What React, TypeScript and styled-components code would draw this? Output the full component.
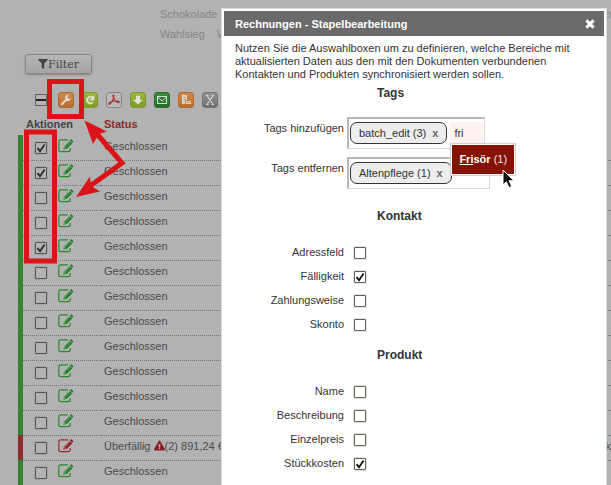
import React from "react";
import styled, { createGlobalStyle } from "styled-components";
import { FaExclamationTriangle, FaFilter } from "react-icons/fa";

const GlobalStyle = createGlobalStyle`
  * { box-sizing: border-box; }
  body {
    margin: 0;
    background: #b2b2b2;
    color: #4b4b4b;
    font-family: "Liberation Sans", Arial, sans-serif;
    font-size: 11px;
    line-height: 13px;
  }
  button, input { font: inherit; color: inherit; margin: 0; padding: 0; }
`;

/* ---------- page behind the dialog ---------- */

const Page = styled.main`
  position: relative;
  height: 100vh;
  overflow: hidden;
`;

const TagCloud = styled.nav`
  padding: 4px 0 0 160px;
`;

const TagLine = styled.div`
  display: flex;
  gap: 12px;
  line-height: 20px;
`;

const TagLink = styled.a<{ $end?: boolean }>`
  color: #858585;
  text-decoration: none;
  white-space: nowrap;
  margin-left: ${(p) => (p.$end ? "auto" : "0")};
`;

const FilterButton = styled.button`
  display: flex;
  align-items: center;
  justify-content: center;
  width: 67px;
  height: 20px;
  margin: 10px 0 0 25px;
  border: 1px solid #868686;
  border-radius: 3px;
  background: linear-gradient(#b6b6b6, #a4a4a4);
  box-shadow: 0 1px 2px rgba(0, 0, 0, 0.25);
  color: #444;
  font-family: "DejaVu Serif", serif;
`;

const Toolbar = styled.div`
  display: flex;
  align-items: center;
  gap: 8px;
  margin: 18px 0 0 34px;
`;

const ToggleAll = styled.button`
  display: block;
  width: 14px;
  height: 14px;
  margin-right: 2px;
  border: 0;
  background: none;
  svg { display: block; }
`;

const ToolButton = styled.button<{ $bg: string; $edge: string }>`
  display: block;
  width: 16px;
  height: 16px;
  border: 1px solid ${(p) => p.$edge};
  border-radius: 3px;
  background: ${(p) => p.$bg};
  svg { display: block; }
`;

const Table = styled.table`
  width: calc(100% - 18px);
  margin: 8px 0 0 18px;
  border-collapse: separate;
  border-spacing: 0;
`;

const Head = styled.th<{ $sorted?: boolean }>`
  height: 19px;
  padding: 2px 0 0 3px;
  text-align: left;
  vertical-align: top;
  color: ${(p) => (p.$sorted ? "#8a2b30" : "#444")};
  &:first-child { padding-left: 8px; }
`;

const Marker = styled.td<{ $overdue?: boolean }>`
  width: 5px;
  padding: 0;
  background: ${(p) => (p.$overdue ? "#8b3030" : "#338533")};
`;

const Cell = styled.td<{ $width?: number }>`
  width: ${(p) => (p.$width ? `${p.$width}px` : "auto")};
  height: 25px;
  padding: 4px 0 0 3px;
  border-top: 1px dotted #777;
  vertical-align: top;
  white-space: nowrap;
  tr:first-child > & { border-top-color: transparent; }
`;

const Actions = styled.div`
  display: flex;
  align-items: flex-start;
  gap: 10px;
  padding-left: 8px;
`;

const IconButton = styled.button<{ $overdue?: boolean }>`
  display: block;
  height: 14px;
  margin-top: -1px;
  border: 0;
  background: none;
  color: ${(p) => (p.$overdue ? "#a32a2a" : "#2a8a2c")};
  svg { display: block; }
`;

const Warn = styled(FaExclamationTriangle)`
  width: 11px;
  height: 11px;
  color: #8b1f24;
  vertical-align: -1px;
`;

/* ---------- check box ---------- */

const CheckWrap = styled.span<{ $dim?: boolean }>`
  display: inline-grid;
  width: 14px;
  height: 14px;
  margin-top: ${(p) => (p.$dim ? "1px" : "0")};
  > * { grid-area: 1 / 1; }
  svg { pointer-events: none; }
`;

const CheckInput = styled.input<{ $dim?: boolean }>`
  appearance: none;
  width: 12px;
  height: 12px;
  margin: 1px;
  border: 1px solid ${(p) => (p.$dim ? "#555" : "#62625a")};
  border-radius: 1px;
  box-shadow: 0 0 0 1px ${(p) => (p.$dim ? "#a5a5a5" : "#e4e2dc")};
  background: ${(p) => (p.$dim ? "#b2b2b2" : "#fff")};
`;

function Check(props: { id?: string; label?: string; checked?: boolean; dim?: boolean }) {
  return (
    <CheckWrap $dim={props.dim}>
      <CheckInput
        type="checkbox"
        id={props.id}
        aria-label={props.label}
        defaultChecked={props.checked}
        $dim={props.dim}
      />
      {props.checked && (
        <svg width="14" height="14" viewBox="0 0 14 14">
          <path d="M3.5 7.2 6 10.2 10.6 3.6" fill="none" stroke={props.dim ? "#2c2c2c" : "#111"} strokeWidth="1.8" />
        </svg>
      )}
    </CheckWrap>
  );
}

/* ---------- dialog ---------- */

const Overlay = styled.div`
  position: absolute;
  inset: 0;
  padding: 8px 4px 0 221px;
`;

const Dialog = styled.section`
  min-height: 100%;
  padding: 2px;
  border: 1px solid #dcdcdc;
  border-bottom: 0;
  background: #fff;
  color: #333;
`;

const TitleBar = styled.header`
  display: flex;
  align-items: center;
  justify-content: space-between;
  height: 25px;
  padding: 1px 9px 0 11px;
  background: #6a6a6a;
  color: #fff;
`;

const Title = styled.h2`
  margin: 0;
  font-size: 11px;
`;

const CloseButton = styled.button`
  width: 10px;
  height: 10px;
  border: 0;
  background: none;
  svg { display: block; }
`;

const Content = styled.form`
  padding: 6px 11px 0;
`;

const Intro = styled.p`
  max-width: 350px;
  margin: 0;
`;

const Heading = styled.h3`
  margin: 0 0 0 142px;
  font-size: 12px;
`;

const Group = styled.fieldset<{ $top: number }>`
  min-width: 0;
  margin: ${(p) => p.$top}px 0 0;
  padding: 0;
  border: 0;
`;

const TagRows = styled.div`
  display: grid;
  gap: 8px;
  margin-top: 17px;
`;

const TagRow = styled.div`
  display: grid;
  grid-template-columns: 109px auto;
  justify-content: start;
  gap: 3px;
  > label { padding-top: 5px; text-align: right; }
`;

const TagBox = styled.div`
  display: flex;
  align-items: flex-start;
  gap: 3px;
  height: 32px;
  padding: 3px 1px 0 1px;
  border: 1px solid #d8d8d8;
  border-top: 2px solid #b8b8b8;
  border-left: 2px solid #b8b8b8;
`;

const Pill = styled.span`
  display: flex;
  align-items: center;
  gap: 6px;
  height: 22px;
  padding: 0 8px;
  border: 1px solid #333;
  border-radius: 7px;
  background: #ededed;
  white-space: nowrap;
`;

const RemoveButton = styled.button`
  border: 0;
  background: none;
  color: #666;
  font-weight: bold;
`;

const Suggest = styled.div`
  position: relative;
`;

const TagInput = styled.input<{ $active?: boolean }>`
  display: block;
  width: 33px;
  height: 21px;
  padding: 0 4px;
  border: 0;
  outline: 0;
  background: ${(p) => (p.$active ? "#fdf2ef" : "transparent")};
`;

const Menu = styled.ul`
  position: absolute;
  z-index: 1;
  top: 21px;
  left: 0;
  margin: 0;
  padding: 1px;
  border: 1px solid #d0d0d0;
  background: #fff;
  list-style: none;
`;

const Option = styled.li`
  padding: 8px 7px;
  background: #861204;
  color: #f3e4e2;
  white-space: nowrap;
  b { color: #fff; }
`;

const Pointer = styled.svg`
  position: absolute;
  top: 25px;
  left: 51px;
`;

const Checks = styled.div`
  display: grid;
  gap: 10px;
  margin-top: 23px;
`;

const CheckRow = styled.div`
  display: grid;
  grid-template-columns: 109px auto;
  justify-content: start;
  gap: 9px;
  height: 14px;
  > label { text-align: right; }
`;

const Annotations = styled.svg`
  position: absolute;
  top: 0;
  left: 0;
  pointer-events: none;
`;

function EditIcon({ id, overdue }: { id: string; overdue?: boolean }) {
  const light = overdue ? "#bd6a62" : "#75a66d";
  const dark = overdue ? "#861616" : "#16791f";
  return (
    <svg width="16" height="14" viewBox="0 0 16 14">
      <defs>
        <linearGradient id={id} x1="0" y1="0" x2="1" y2="1">
          <stop offset="0.3" stopColor={light} />
          <stop offset="0.6" stopColor={dark} />
        </linearGradient>
      </defs>
      <path
        d="M10 .8H2.8Q.8.8.8 2.8v7.8Q.8 12.6 2.8 12.6h7.4Q12.2 12.6 12.2 10.6V9"
        fill="none"
        stroke="currentColor"
        strokeWidth="1.2"
      />
      <path d="M5.2 10.8 6 7.4 11.6 1.7 14.3 4.3 8.6 10.1z" fill={`url(#${id})`} />
      <path d="M12 1.2 12.8.5q.4-.3.8 0l1.5 1.5q.4.4 0 .8l-.8.9z" fill={dark} />
      <path d="M6.2 8.4 7.6 9.8" stroke="#c8c8c8" strokeWidth=".7" />
    </svg>
  );
}

const tools = [
  {
    name: "Stapelbearbeitung", bg: "linear-gradient(#cf8950,#bd6c28)", edge: "#b06a31",
    art: <><path d="M2.8 11.2 8 6" stroke="#e3d8cd" strokeWidth="2" strokeLinecap="round" /><path d="M9.7 2A3 3 0 1 0 12 5.3L10 6 8.4 4.5z" fill="#e3d8cd" /></>,
  },
  {
    name: "Aktualisieren", bg: "linear-gradient(#9cb63e,#7b9d25)", edge: "#7d9b2b",
    art: <><path d="M9.4 4.6A3.2 3.2 0 1 0 9.8 9.2" fill="none" stroke="#dce0cb" strokeWidth="2" /><path d="M11.4 2.2v5.2H6.2z" fill="#dce0cb" /></>,
  },
  {
    name: "PDF", bg: "#b9b9b9", edge: "#858585",
    art: <path d="M6.1 2.2C7.6 1.8 6.7 5 5.4 7.5 4.1 10 2.4 12 1.9 11.1 1.3 9.8 5 8.1 8.2 8 11 7.8 12.8 8.6 12.2 9.4 11.2 10.4 8.5 8.3 7.3 6.2 6.2 4.3 5.4 2.5 6.1 2.2" fill="none" stroke="#a52d31" strokeWidth="1.1" />,
  },
  {
    name: "Herunterladen", bg: "linear-gradient(#9cb63e,#7b9d25)", edge: "#7d9b2b",
    art: <path d="M5 2.8h4v4h3L7 11.6 2 6.8h3z" fill="#e1e4d4" />,
  },
  {
    name: "E-Mail", bg: "linear-gradient(#3f8a42,#226e27)", edge: "#286c2c",
    art: <><rect x="2.5" y="3.5" width="9" height="7" fill="#307a33" stroke="#d6ded4" /><path d="M2.5 4 7 8 11.5 4" fill="none" stroke="#d6ded4" /></>,
  },
  {
    name: "Dokumente", bg: "linear-gradient(#cf8950,#bd6c28)", edge: "#b06a31",
    art: <><path d="M3 2h5v9H3z" fill="#e0d3c5" /><path d="M4.5 4.5h2M4.5 6.5h2" stroke="#c57b3d" strokeWidth=".8" /><path d="M6.5 7.5h6v4h-6z" fill="#e0d3c5" stroke="#bd6c28" strokeWidth=".8" /><path d="M8 9.5h3" stroke="#c57b3d" strokeWidth=".8" /></>,
  },
  {
    name: "Excel", bg: "linear-gradient(#949494,#6f6f6f)", edge: "#747474",
    art: <path d="M4 2.5 10 11.5M10 2.5 4 11.5M3 2.5h2.5M8.5 2.5H11M3 11.5h2.5M8.5 11.5H11" stroke="#d8d8d8" strokeWidth="1.2" />,
  },
];

const rows = [true, true, false, false, true, false, false, false, false, false, false, false, false, false].map(
  (checked, i) => ({ id: i, checked, overdue: i === 12 })
);

function Checklist({ title, top, items }: { title: string; top: number; items: [string, boolean][] }) {
  return (
    <Group $top={top} aria-label={title}>
      <Heading>{title}</Heading>
      <Checks>
        {items.map(([name, on]) => (
          <CheckRow key={name}>
            <label htmlFor={name}>{name}</label>
            <Check id={name} checked={on} />
          </CheckRow>
        ))}
      </Checks>
    </Group>
  );
}

export default function App() {
  return (
    <Page>
      <GlobalStyle />
      <TagCloud>
        <TagLine>
          <TagLink href="#schokolade">Schokolade</TagLink>
          <TagLink href="#p" $end>p</TagLink>
        </TagLine>
        <TagLine>
          <TagLink href="#wahlsieg">Wahlsieg</TagLink>
          <TagLink href="#w">W</TagLink>
        </TagLine>
      </TagCloud>
      <FilterButton type="button">
        <FaFilter size={10} />
        Filter
      </FilterButton>
      <Toolbar>
        <ToggleAll type="button" aria-label="Alle auswählen">
          <svg width="14" height="14" viewBox="0 0 14 14">
            <rect x="1.5" y="1.5" width="11" height="11" fill="#b6b6b6" stroke="#626262" />
            <path d="M2 7h10" stroke="#222" strokeWidth="2" />
          </svg>
        </ToggleAll>
        {tools.map((t) => (
          <ToolButton key={t.name} type="button" aria-label={t.name} $bg={t.bg} $edge={t.edge}>
            <svg width="14" height="14" viewBox="0 0 14 14">{t.art}</svg>
          </ToolButton>
        ))}
      </Toolbar>
      <Table>
        <thead>
          <tr>
            <Head colSpan={2}>Aktionen</Head>
            <Head $sorted>Status</Head>
            <Head />
          </tr>
        </thead>
        <tbody>
          {rows.map((r) => (
            <tr key={r.id}>
              <Marker $overdue={r.overdue} />
              <Cell $width={78}>
                <Actions>
                  <Check dim checked={r.checked} label={`Rechnung ${r.id + 1}`} />
                  <IconButton type="button" aria-label="Bearbeiten" $overdue={r.overdue}>
                    <EditIcon id={`pen${r.id}`} overdue={r.overdue} />
                  </IconButton>
                </Actions>
              </Cell>
              <Cell>{r.overdue ? <>Überfällig <Warn />(2) 891,24 €</> : "Geschlossen"}</Cell>
              <Cell $width={7}>{r.overdue ? "k" : ""}</Cell>
            </tr>
          ))}
        </tbody>
      </Table>

      <Overlay>
        <Dialog role="dialog" aria-labelledby="dialog-title">
          <TitleBar>
            <Title id="dialog-title">Rechnungen - Stapelbearbeitung</Title>
            <CloseButton type="button" aria-label="Schließen">
              <svg width="10" height="10" viewBox="0 0 10 10">
                <path d="M1.4 1.4 8.6 8.6M8.6 1.4 1.4 8.6" stroke="#fff" strokeWidth="2.9" />
              </svg>
            </CloseButton>
          </TitleBar>
          <Content>
            <Intro>
              Nutzen Sie die Auswahlboxen um zu definieren, welche Bereiche mit aktualisierten Daten aus den mit den
              Dokumenten verbundenen Kontakten und Produkten synchronisiert werden sollen.
            </Intro>
            <Group $top={6} aria-label="Tags">
              <Heading>Tags</Heading>
              <TagRows>
                <TagRow>
                  <label htmlFor="tag-add">Tags hinzufügen</label>
                  <TagBox>
                    <Pill>
                      batch_edit (3)
                      <RemoveButton type="button" aria-label="batch_edit entfernen">x</RemoveButton>
                    </Pill>
                    <Suggest>
                      <TagInput id="tag-add" defaultValue="fri" $active />
                      <Menu role="listbox">
                        <Option role="option" aria-selected>
                          <b><u>Fri</u>sör</b> (1)
                        </Option>
                        <Pointer width="14" height="20" viewBox="0 0 14 20">
                          <path d="M1 1v15l3.4-3.2 2.5 5.8 2.8-1.2-2.5-5.6H12z" fill="#111" stroke="#fff" />
                        </Pointer>
                      </Menu>
                    </Suggest>
                  </TagBox>
                </TagRow>
                <TagRow>
                  <label htmlFor="tag-remove">Tags entfernen</label>
                  <TagBox>
                    <Pill>
                      Altenpflege (1)
                      <RemoveButton type="button" aria-label="Altenpflege entfernen">x</RemoveButton>
                    </Pill>
                    <TagInput id="tag-remove" />
                  </TagBox>
                </TagRow>
              </TagRows>
            </Group>
            <Checklist
              title="Kontakt"
              top={21}
              items={[["Adressfeld", false], ["Fälligkeit", true], ["Zahlungsweise", false], ["Skonto", false]]}
            />
            <Checklist
              title="Produkt"
              top={17}
              items={[["Name", false], ["Beschreibung", false], ["Einzelpreis", false], ["Stückkosten", true]]}
            />
          </Content>
        </Dialog>
      </Overlay>

      <Annotations width="130" height="270" viewBox="0 0 130 270">
        <g fill="none" stroke="#da1418" strokeWidth="5">
          <rect x="49.5" y="81.5" width="32" height="35" />
          <rect x="26.5" y="132" width="28" height="129" />
          <path d="M97 134 122 163 90 186" />
        </g>
        <path d="M84.5 120.5 107 131.5 99 134 93 144zM76 197 90 176.5 91 186 100 191.5z" fill="#da1418" />
      </Annotations>
    </Page>
  );
}
